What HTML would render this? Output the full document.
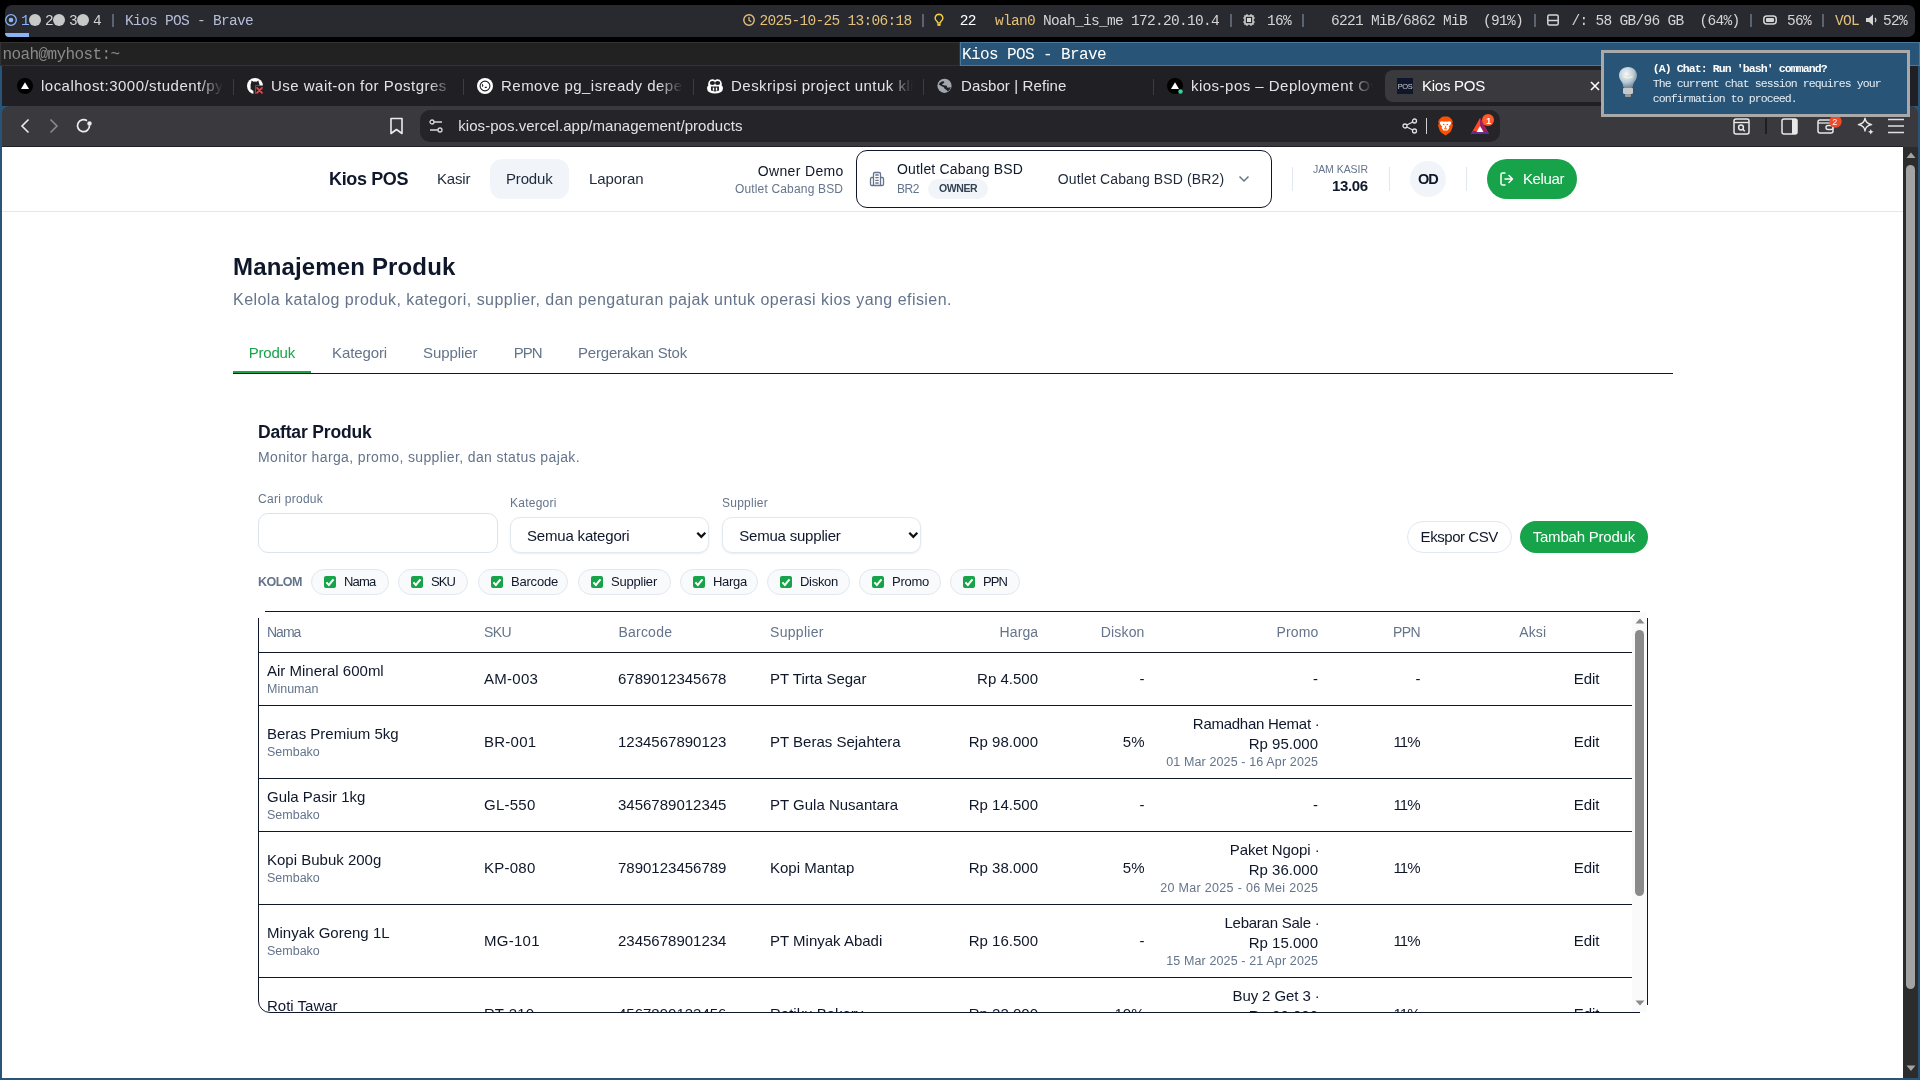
<!DOCTYPE html>
<html><head><meta charset="utf-8"><title>Kios POS</title>
<style>
html,body{margin:0;padding:0;width:1920px;height:1080px;overflow:hidden;background:#000;}
body{position:relative;font-family:"Liberation Sans",sans-serif;}
div,svg,span{position:absolute;}
.t{white-space:pre;line-height:normal;}
</style></head><body>
<div style="left:0;top:0;width:1920px;height:1080px;will-change:transform">
<div style='left:0px;top:0px;width:1920px;height:42px;background:#000'></div>
<div style='left:5px;top:5px;width:1910px;height:32px;background:#282a2f;border-radius:7px'></div>
<div style='left:5px;top:33px;width:24px;height:4px;background:#8ab4f8;border-radius:0 0 0 6px'></div>
<svg style='left:5px;top:14px;' width='12' height='12' viewBox='0 0 12 12'><circle cx='6' cy='6' r='5.3' fill='none' stroke='#8ab4f8' stroke-width='1.3'/><circle cx='6' cy='6' r='2.3' fill='#8ab4f8'/></svg>
<span class='t' style='top:13.00px;font-family:"Liberation Mono",monospace;font-size:14.5px;font-weight:400;color:#8ab4f8;letter-spacing:-0.700px;left:21.00px;'>1</span>
<svg style='left:29px;top:14px;' width='12' height='12' viewBox='0 0 12 12'><circle cx='6' cy='6' r='6' fill='#c8c8c8'/></svg>
<span class='t' style='top:13.00px;font-family:"Liberation Mono",monospace;font-size:14.5px;font-weight:400;color:#d4d4d4;letter-spacing:-0.700px;left:45.00px;'>2</span>
<svg style='left:53px;top:14px;' width='12' height='12' viewBox='0 0 12 12'><circle cx='6' cy='6' r='6' fill='#c8c8c8'/></svg>
<span class='t' style='top:13.00px;font-family:"Liberation Mono",monospace;font-size:14.5px;font-weight:400;color:#d4d4d4;letter-spacing:-0.700px;left:69.00px;'>3</span>
<svg style='left:77px;top:14px;' width='12' height='12' viewBox='0 0 12 12'><circle cx='6' cy='6' r='6' fill='#c8c8c8'/></svg>
<span class='t' style='top:13.00px;font-family:"Liberation Mono",monospace;font-size:14.5px;font-weight:400;color:#d4d4d4;letter-spacing:-0.700px;left:93.00px;'>4</span>
<div style='left:112px;top:14px;width:2px;height:13px;background:#5c6370'></div>
<span class='t' style='top:13.00px;font-family:"Liberation Mono",monospace;font-size:14.5px;font-weight:400;color:#b7bdd9;letter-spacing:-0.700px;left:125.00px;'>Kios POS - Brave</span>
<svg style='left:743px;top:14px;' width='12' height='12' viewBox='0 0 12 12'><circle cx='6' cy='6' r='5.2' fill='none' stroke='#e5c07b' stroke-width='1.4'/><path d='M6 3v3.2l2.2 1.6' fill='none' stroke='#e5c07b' stroke-width='1.3'/></svg>
<span class='t' style='top:13.00px;font-family:"Liberation Mono",monospace;font-size:14.5px;font-weight:400;color:#e5c07b;letter-spacing:-0.700px;left:759.50px;'>2025-10-25 13:06:18</span>
<div style='left:922px;top:14px;width:2px;height:13px;background:#5c6370'></div>
<svg style='left:934px;top:13px;' width='10' height='14' viewBox='0 0 10 14'><path d='M5 1.2a3.8 3.8 0 0 0-2.3 6.8c.6.5.9 1.2.9 1.9h2.8c0-.7.3-1.4.9-1.9A3.8 3.8 0 0 0 5 1.2z' fill='none' stroke='#f5d142' stroke-width='1.4'/><rect x='3.4' y='10.6' width='3.2' height='2.2' fill='#f5d142'/></svg>
<span class='t' style='top:13.00px;font-family:"Liberation Mono",monospace;font-size:14.5px;font-weight:400;color:#ffffff;letter-spacing:-0.700px;left:959.70px;'>22</span>
<span class='t' style='top:13.00px;font-family:"Liberation Mono",monospace;font-size:14.5px;font-weight:400;color:#e5c07b;letter-spacing:-0.700px;left:995.00px;'>wlan0</span>
<span class='t' style='top:13.00px;font-family:"Liberation Mono",monospace;font-size:14.5px;font-weight:400;color:#d4d4d4;letter-spacing:-0.700px;left:1043.00px;'>Noah_is_me 172.20.10.4</span>
<div style='left:1230px;top:14px;width:2px;height:13px;background:#5c6370'></div>
<svg style='left:1243px;top:14px;' width='12' height='12' viewBox='0 0 12 12'><rect x='2' y='2' width='8' height='8' fill='none' stroke='#d4d4d4' stroke-width='1.5'/><rect x='4' y='4' width='4' height='4' fill='#d4d4d4'/><path d='M0 4h2M0 8h2M10 4h2M10 8h2M4 0v2M8 0v2M4 10v2M8 10v2' stroke='#d4d4d4' stroke-width='1.2'/></svg>
<span class='t' style='top:13.00px;font-family:"Liberation Mono",monospace;font-size:14.5px;font-weight:400;color:#d4d4d4;letter-spacing:-0.700px;left:1267.00px;'>16%</span>
<div style='left:1302px;top:14px;width:2px;height:13px;background:#5c6370'></div>
<span class='t' style='top:13.00px;font-family:"Liberation Mono",monospace;font-size:14.5px;font-weight:400;color:#d4d4d4;letter-spacing:-0.700px;left:1331.00px;'>6221 MiB/6862 MiB  (91%)</span>
<div style='left:1534px;top:14px;width:2px;height:13px;background:#5c6370'></div>
<svg style='left:1547px;top:14px;' width='12' height='12' viewBox='0 0 12 12'><rect x='0.8' y='1' width='10.4' height='10' rx='1.5' fill='none' stroke='#d4d4d4' stroke-width='1.5'/><path d='M1 6.5h10' stroke='#d4d4d4' stroke-width='1.5'/></svg>
<span class='t' style='top:13.00px;font-family:"Liberation Mono",monospace;font-size:14.5px;font-weight:400;color:#d4d4d4;letter-spacing:-0.700px;left:1571.60px;'>/: 58 GB/96 GB  (64%)</span>
<div style='left:1750px;top:14px;width:2px;height:13px;background:#5c6370'></div>
<svg style='left:1763px;top:15px;' width='14' height='10' viewBox='0 0 14 10'><rect x='0.8' y='1' width='12.4' height='8' rx='3' fill='none' stroke='#d4d4d4' stroke-width='1.5'/><rect x='3' y='3' width='8' height='4' rx='1' fill='#d4d4d4'/></svg>
<span class='t' style='top:13.00px;font-family:"Liberation Mono",monospace;font-size:14.5px;font-weight:400;color:#d4d4d4;letter-spacing:-0.700px;left:1787.00px;'>56%</span>
<div style='left:1822px;top:14px;width:2px;height:13px;background:#5c6370'></div>
<span class='t' style='top:13.00px;font-family:"Liberation Mono",monospace;font-size:14.5px;font-weight:400;color:#e5c07b;letter-spacing:-0.700px;left:1835.00px;'>VOL</span>
<svg style='left:1866px;top:14px;' width='12' height='12' viewBox='0 0 12 12'><path d='M0 4h3l4-3.5v11L3 8H0z' fill='#d4d4d4'/><path d='M9 4a3 3 0 0 1 0 4' fill='none' stroke='#d4d4d4' stroke-width='1.2'/></svg>
<span class='t' style='top:13.00px;font-family:"Liberation Mono",monospace;font-size:14.5px;font-weight:400;color:#d4d4d4;letter-spacing:-0.700px;left:1883.00px;'>52%</span>
<div style='left:0px;top:42px;width:960px;height:24px;background:#222222;box-sizing:border-box;border:1px solid #333333'></div>
<span class='t' style='top:46.00px;font-family:"Liberation Mono",monospace;font-size:16px;font-weight:400;color:#8a8a8a;letter-spacing:-0.600px;left:2.50px;'>noah@myhost:~</span>
<div style='left:960px;top:42px;width:960px;height:24px;background:#285577;box-sizing:border-box;border:1px solid #4c7899'></div>
<span class='t' style='top:46.00px;font-family:"Liberation Mono",monospace;font-size:16px;font-weight:400;color:#ffffff;letter-spacing:-0.600px;left:962.00px;'>Kios POS - Brave</span>
<div style='left:0px;top:66px;width:1920px;height:1014px;background:#285577'></div>
<div style='left:2px;top:66px;width:1916px;height:40px;background:#202024'></div>
<svg style='left:17px;top:78px;' width='16' height='16' viewBox='0 0 16 16'><circle cx='8' cy='8' r='8' fill='#000'/><path d='M8 4.2l4 6.8H4z' fill='#fff'/></svg>
<span class='t' style='top:77.00px;font-family:"Liberation Sans",sans-serif;font-size:15px;font-weight:400;color:#e3e3e6;letter-spacing:0.480px;left:41.00px;width:182px;overflow:hidden;-webkit-mask-image:linear-gradient(90deg,#000 158px,transparent 182px)'>localhost:3000/student/py</span>
<div style='left:233px;top:79px;width:1px;height:16px;background:#3c3c42'></div>
<svg style='left:247px;top:78px;' width='16' height='16' viewBox='0 0 16 16'><defs><clipPath id='ghc'><path d='M0 0H16V7.5H8.5V16H0Z'/></clipPath></defs><g clip-path='url(#ghc)'><circle cx='8' cy='8' r='8' fill='#fff'/><path d='M4.2 4.6L4.6 2.6 6.6 3.8Q8 3.4 9.4 3.8L11.4 2.6 11.8 4.6Q12.8 6 12.5 8.5 12 11.3 9.6 11.9V16H6.4V12.8Q4.8 12.6 4.2 11.2L3.2 10.4 4 11.9Q3.6 11.2 3.6 9 3.2 6.2 4.2 4.6Z' fill='#202024'/></g><path d='M10 9.8l5 5M15 9.8l-5 5' stroke='#e5484d' stroke-width='1.7' stroke-linecap='round'/></svg>
<span class='t' style='top:77.00px;font-family:"Liberation Sans",sans-serif;font-size:15px;font-weight:400;color:#e3e3e6;letter-spacing:0.480px;left:271.00px;width:182px;overflow:hidden;-webkit-mask-image:linear-gradient(90deg,#000 158px,transparent 182px)'>Use wait-on for Postgres r</span>
<div style='left:463px;top:79px;width:1px;height:16px;background:#3c3c42'></div>
<svg style='left:477px;top:78px;' width='16' height='16' viewBox='0 0 16 16'><circle cx='8' cy='8' r='8' fill='#fff'/><circle cx='8' cy='8' r='4.9' fill='none' stroke='#202024' stroke-width='1.1'/><path d='M5.2 6.2Q6.3 7.5 5.4 8.8M7.8 9.4h2' stroke='#202024' stroke-width='1.1' fill='none'/></svg>
<span class='t' style='top:77.00px;font-family:"Liberation Sans",sans-serif;font-size:15px;font-weight:400;color:#e3e3e6;letter-spacing:0.480px;left:501.00px;width:182px;overflow:hidden;-webkit-mask-image:linear-gradient(90deg,#000 158px,transparent 182px)'>Remove pg_isready deper</span>
<div style='left:693px;top:79px;width:1px;height:16px;background:#3c3c42'></div>
<svg style='left:706px;top:78px;' width='18' height='16' viewBox='0 0 18 16'><path d='M1 10.2Q1 8.2 2.4 7.6 1.8 5.4 2.8 3.4 4.2 1 6.6 1.2 8 1.4 9 2.2 10 1.4 11.4 1.2 13.8 1 15.2 3.4 16.2 5.4 15.6 7.6 17 8.2 17 10.2 17 12.8 14.6 14.2 12.2 15.4 9 15.4 5.8 15.4 3.4 14.2 1 12.8 1 10.2Z' fill='#fff'/><ellipse cx='6.4' cy='5' rx='2.6' ry='2' fill='#202024'/><ellipse cx='11.6' cy='5' rx='2.6' ry='2' fill='#202024'/><path d='M5 8.6H13V12.6Q9 14.2 5 12.6Z' fill='#202024'/><rect x='6.8' y='9.6' width='1.4' height='3' fill='#fff'/><rect x='9.8' y='9.6' width='1.4' height='3' fill='#fff'/></svg>
<span class='t' style='top:77.00px;font-family:"Liberation Sans",sans-serif;font-size:15px;font-weight:400;color:#e3e3e6;letter-spacing:0.480px;left:731.00px;width:182px;overflow:hidden;-webkit-mask-image:linear-gradient(90deg,#000 158px,transparent 182px)'>Deskripsi project untuk klie</span>
<div style='left:923px;top:79px;width:1px;height:16px;background:#3c3c42'></div>
<svg style='left:937px;top:78px;' width='16' height='16' viewBox='0 0 16 16'><circle cx='7.5' cy='7.8' r='7.1' fill='#a3a6ad'/><path d='M1.8 6.6Q3 3.4 6.4 3.2 7.6 3.4 7.2 4.6 6.4 5.6 4.8 6.2 6.6 7.8 9 7.6 10.6 8 10.2 9.8 12 9.6 13.8 9.2 13.2 11.8 10.6 13.6 10.4 12.2 8.6 11.6 7.2 10.6 6.8 9.2 4.4 8.4 1.8 6.6Z' fill='#202024'/></svg>
<span class='t' style='top:77.00px;font-family:"Liberation Sans",sans-serif;font-size:15px;font-weight:400;color:#e3e3e6;letter-spacing:0.103px;left:961.00px;'>Dasbor | Refine</span>
<div style='left:1153px;top:79px;width:1px;height:16px;background:#3c3c42'></div>
<svg style='left:1167px;top:78px;' width='16' height='16' viewBox='0 0 16 16'><circle cx='8' cy='8' r='8' fill='#000'/><path d='M8 4.2l4 6.8H4z' fill='#fff'/><circle cx='13.5' cy='13.5' r='2.2' fill='#34d399'/></svg>
<span class='t' style='top:77.00px;font-family:"Liberation Sans",sans-serif;font-size:15px;font-weight:400;color:#e3e3e6;letter-spacing:0.480px;left:1191.00px;width:182px;overflow:hidden;-webkit-mask-image:linear-gradient(90deg,#000 158px,transparent 182px)'>kios-pos – Deployment Ov</span>
<div style='left:1385px;top:70px;width:240px;height:32px;background:#3a393e;border-radius:8px'></div>
<div style='left:1397px;top:78px;width:16px;height:16px;background:#0f1729;color:#c9cdd6;font:400 7.5px "Liberation Sans",sans-serif;line-height:18px;text-align:center;letter-spacing:-0.4px'>POS</div>
<span class='t' style='top:77.00px;font-family:"Liberation Sans",sans-serif;font-size:15px;font-weight:400;color:#ffffff;letter-spacing:-0.254px;left:1422.00px;'>Kios POS</span>
<svg style='left:1590px;top:81px;' width='10' height='10' viewBox='0 0 10 10'><path d='M1 1l8 8M9 1L1 9' stroke='#fff' stroke-width='1.6'/></svg>
<div style='left:2px;top:106px;width:1916px;height:41px;background:#3a393e;border-radius:8px 8px 0 0'></div>
<div style='left:2px;top:146px;width:1901px;height:1px;background:#222026'></div>
<svg style='left:19px;top:118px;' width='12' height='16' viewBox='0 0 12 16'><path d='M9.5 1.5L3 8l6.5 6.5' fill='none' stroke='#ececec' stroke-width='1.6'/></svg>
<svg style='left:48px;top:118px;' width='12' height='16' viewBox='0 0 12 16'><path d='M2.5 1.5L9 8l-6.5 6.5' fill='none' stroke='#8a8a8e' stroke-width='1.6'/></svg>
<svg style='left:75px;top:117px;' width='18' height='18' viewBox='0 0 18 18'><path d='M14.5 8.5A6 6 0 1 1 12 3.8' fill='none' stroke='#ececec' stroke-width='1.7'/><circle cx='14.5' cy='6.5' r='2.2' fill='#ececec'/></svg>
<svg style='left:389px;top:117px;' width='15' height='18' viewBox='0 0 15 18'><path d='M2 1.5h11v15l-5.5-4-5.5 4z' fill='none' stroke='#ececec' stroke-width='1.6' stroke-linejoin='round'/></svg>
<div style='left:420px;top:110px;width:1080px;height:32px;background:#252429;border-radius:10px'></div>
<svg style='left:429px;top:119px;' width='14' height='14' viewBox='0 0 14 14'><path d='M5 3h8M1 11h8' stroke='#d8d8d8' stroke-width='1.4'/><circle cx='3' cy='3' r='2' fill='none' stroke='#d8d8d8' stroke-width='1.3'/><circle cx='11' cy='11' r='2' fill='none' stroke='#d8d8d8' stroke-width='1.3'/></svg>
<span class='t' style='top:116.80px;font-family:"Liberation Sans",sans-serif;font-size:15px;font-weight:400;color:#e2e2e4;letter-spacing:0.040px;left:458.30px;'>kios-pos.vercel.app/management/products</span>
<svg style='left:1402px;top:118px;' width='16' height='16' viewBox='0 0 16 16'><circle cx='12.5' cy='3' r='2' fill='none' stroke='#e0e0e0' stroke-width='1.3'/><circle cx='3' cy='8' r='2' fill='none' stroke='#e0e0e0' stroke-width='1.3'/><circle cx='12.5' cy='13' r='2' fill='none' stroke='#e0e0e0' stroke-width='1.3'/><path d='M4.8 7l6-3M4.8 9l6 3' stroke='#e0e0e0' stroke-width='1.3'/></svg>
<div style='left:1426px;top:118px;width:1px;height:16px;background:#d0d0d0'></div>
<svg style='left:1437px;top:116px;' width='17' height='20' viewBox='0 0 17 20'><path d='M4.5 1.2L6.3 0.6H10.7L12.5 1.2 14.8 3.4 15.8 5.8 15.2 7.4 16 9.2 14.4 14.2Q13.4 16.4 11.4 17.6L8.5 19.6 5.6 17.6Q3.6 16.4 2.6 14.2L1 9.2 1.8 7.4 1.2 5.8 2.2 3.4Z' fill='#ff5000'/><path d='M2.8 6.2Q4 5.2 5.6 5.4L7.2 5.8 8.5 5.4 9.8 5.8 11.4 5.4Q13 5.2 14.2 6.2L13.6 8.4 11.8 10.6 12.4 11.8 10.6 14.4H6.4L4.6 11.8 5.2 10.6 3.4 8.4Z' fill='#fff'/><path d='M6 8.2L7.4 8.8M11 8.2L9.6 8.8M8.5 10.2V11.8M7.2 12.8H9.8' stroke='#ff5000' stroke-width='1.1'/></svg>
<svg style='left:1470px;top:117px;' width='21' height='18' viewBox='0 0 21 18'><path d='M10 1L1 17h18z' fill='#ff4724'/><path d='M10 1L19 17h-4.5L10 9z' fill='#9e1f63'/><path d='M1 17h18l-2-3H3z' fill='#662d91'/><path d='M10 9l-3.5 6h7z' fill='#fff'/></svg>
<svg style='left:1482px;top:114px;' width='12' height='12' viewBox='0 0 12 12'><circle cx='6' cy='6' r='6' fill='#ff5a2b'/></svg>
<span class='t' style='top:114.50px;font-family:"Liberation Sans",sans-serif;font-size:9.5px;font-weight:700;color:#ffffff;left:1486.00px;'>1</span>
<svg style='left:1733px;top:118px;' width='17' height='17' viewBox='0 0 17 17'><rect x='1' y='1' width='15' height='15' rx='2' fill='none' stroke='#e8e8e8' stroke-width='1.5'/><path d='M1 4.5h15' stroke='#e8e8e8' stroke-width='1.4'/><circle cx='8' cy='9.5' r='2.4' fill='none' stroke='#e8e8e8' stroke-width='1.5'/><path d='M9.8 11.3l2 2' stroke='#e8e8e8' stroke-width='1.5'/></svg>
<div style='left:1765px;top:118px;width:2px;height:16px;background:#1e1e22'></div>
<svg style='left:1781px;top:118px;' width='17' height='17' viewBox='0 0 17 17'><rect x='1' y='1' width='15' height='15' rx='2' fill='none' stroke='#e8e8e8' stroke-width='1.5'/><rect x='11' y='1' width='5' height='15' fill='#e8e8e8'/></svg>
<svg style='left:1817px;top:118px;' width='18' height='17' viewBox='0 0 18 17'><rect x='1' y='2' width='15' height='13' rx='2' fill='none' stroke='#e8e8e8' stroke-width='1.5'/><path d='M1 5h15' stroke='#e8e8e8' stroke-width='1.3'/><rect x='9' y='7.5' width='7' height='4' rx='2' fill='none' stroke='#e8e8e8' stroke-width='1.4'/></svg>
<svg style='left:1829px;top:115px;' width='13' height='13' viewBox='0 0 13 13'><circle cx='6.5' cy='6.5' r='6.2' fill='#f04a2a'/></svg>
<span class='t' style='top:117.00px;font-family:"Liberation Sans",sans-serif;font-size:9px;font-weight:400;color:#ffffff;left:1832.30px;'>2</span>
<svg style='left:1857px;top:117px;' width='18' height='19' viewBox='0 0 18 19'><path d='M8 1.2Q8.6 6.6 14.6 7.6 8.6 8.6 8 14 7.4 8.6 1.4 7.6 7.4 6.6 8 1.2Z' fill='none' stroke='#e8e8e8' stroke-width='1.4' stroke-linejoin='round'/><path d='M13.8 12Q14.1 14.4 16.6 14.8 14.1 15.2 13.8 17.6 13.5 15.2 11 14.8 13.5 14.4 13.8 12Z' fill='#e8e8e8'/></svg>
<svg style='left:1888px;top:118px;' width='17' height='16' viewBox='0 0 17 16'><path d='M0 1.5h16M0 8h16M0 14.5h16' stroke='#e0e0e0' stroke-width='1.6'/></svg>
<div style='left:2px;top:147px;width:1901px;height:931px;background:#ffffff'></div>
<div style='left:1903px;top:147px;width:15px;height:931px;background:#2c2c2c'></div>
<svg style='left:1906px;top:152px;' width='10' height='7' viewBox='0 0 10 7'><path d='M5 0.5L9.5 6h-9z' fill='#a3a3a3'/></svg>
<div style='left:1906px;top:165px;width:9px;height:824px;background:#a3a3a3;border-radius:4.5px'></div>
<svg style='left:1906px;top:1065px;' width='10' height='7' viewBox='0 0 10 7'><path d='M0.5 0.5h9L5 6z' fill='#a3a3a3'/></svg>
<div style='left:2px;top:211px;width:1901px;height:1px;background:#e2e8f0'></div>
<span class='t' style='top:168.70px;font-family:"Liberation Sans",sans-serif;font-size:18px;font-weight:700;color:#0f172a;letter-spacing:-0.366px;left:329.00px;'>Kios POS</span>
<div style='left:490px;top:159px;width:79px;height:40px;background:#f1f5f9;border-radius:12px'></div>
<span class='t' style='top:170.30px;font-family:"Liberation Sans",sans-serif;font-size:15px;font-weight:400;color:#1e293b;letter-spacing:-0.178px;left:437.00px;'>Kasir</span>
<span class='t' style='top:170.30px;font-family:"Liberation Sans",sans-serif;font-size:15px;font-weight:400;color:#1e293b;letter-spacing:-0.172px;left:506.00px;'>Produk</span>
<span class='t' style='top:170.30px;font-family:"Liberation Sans",sans-serif;font-size:15px;font-weight:400;color:#1e293b;letter-spacing:-0.080px;left:589.00px;'>Laporan</span>
<span class='t' style='top:162.50px;font-family:"Liberation Sans",sans-serif;font-size:14px;font-weight:400;color:#0f172a;letter-spacing:0.333px;right:1076.37px;text-align:right;'>Owner Demo</span>
<span class='t' style='top:182.00px;font-family:"Liberation Sans",sans-serif;font-size:12px;font-weight:400;color:#64748b;letter-spacing:0.170px;right:1076.83px;text-align:right;'>Outlet Cabang BSD</span>
<div style='left:856px;top:150px;width:416px;height:58px;box-sizing:border-box;border:1px solid #0f172a;border-radius:11px'></div>
<svg style='left:869px;top:171px;' width='16' height='16' viewBox='0 0 16 16'><path d='M4.5 14.5V2.8c0-.7.5-1.3 1.2-1.3h4.6c.7 0 1.2.6 1.2 1.3v11.7M4.5 6.5H2.8c-.7 0-1.3.6-1.3 1.3v5.4c0 .7.6 1.3 1.3 1.3h10.4c.7 0 1.3-.6 1.3-1.3V7.8c0-.7-.6-1.3-1.3-1.3h-1.7M6.8 4h2.4M6.8 6.7h2.4M6.8 9.4h2.4M6.8 12h2.4' fill='none' stroke='#64748b' stroke-width='1.3' stroke-linecap='round'/></svg>
<span class='t' style='top:160.80px;font-family:"Liberation Sans",sans-serif;font-size:14px;font-weight:400;color:#0f172a;letter-spacing:0.178px;left:897.00px;'>Outlet Cabang BSD</span>
<span class='t' style='top:182.00px;font-family:"Liberation Sans",sans-serif;font-size:12px;font-weight:400;color:#64748b;letter-spacing:-0.448px;left:897.00px;'>BR2</span>
<div style='left:928px;top:179px;width:60px;height:20px;background:#f1f5f9;border-radius:10px'></div>
<span class='t' style='top:182.00px;font-family:"Liberation Sans",sans-serif;font-size:10.5px;font-weight:700;color:#334155;letter-spacing:-0.390px;left:939.00px;'>OWNER</span>
<span class='t' style='top:170.90px;font-family:"Liberation Sans",sans-serif;font-size:14px;font-weight:400;color:#1e293b;letter-spacing:0.135px;left:1057.80px;'>Outlet Cabang BSD (BR2)</span>
<svg style='left:1238px;top:175px;' width='12' height='8' viewBox='0 0 12 8'><path d='M1.5 1.5l4.5 4.5 4.5-4.5' fill='none' stroke='#64748b' stroke-width='1.5'/></svg>
<div style='left:1292px;top:167px;width:1px;height:24px;background:#e2e8f0'></div>
<span class='t' style='top:163.00px;font-family:"Liberation Sans",sans-serif;font-size:10.5px;font-weight:400;color:#64748b;letter-spacing:-0.049px;right:552.05px;text-align:right;'>JAM KASIR</span>
<span class='t' style='top:177.00px;font-family:"Liberation Sans",sans-serif;font-size:15px;font-weight:700;color:#0f172a;letter-spacing:-0.409px;right:552.41px;text-align:right;'>13.06</span>
<div style='left:1389px;top:167px;width:1px;height:24px;background:#e2e8f0'></div>
<div style='left:1410px;top:161px;width:36px;height:36px;background:#f1f5f9;border-radius:50%'></div>
<span class='t' style='top:170.90px;font-family:"Liberation Sans",sans-serif;font-size:14.5px;font-weight:700;color:#0f172a;letter-spacing:-1.000px;left:1418.00px;'>OD</span>
<div style='left:1466px;top:167px;width:1px;height:24px;background:#e2e8f0'></div>
<div style='left:1487px;top:159px;width:90px;height:40px;background:#16a34a;border-radius:20px'></div>
<svg style='left:1499px;top:171px;' width='16' height='16' viewBox='0 0 16 16'><path d='M6 2H3.5A1.5 1.5 0 0 0 2 3.5v9A1.5 1.5 0 0 0 3.5 14H6M10 4.5L13.5 8 10 11.5M13.5 8H6' fill='none' stroke='#ffffff' stroke-width='1.5' stroke-linecap='round' stroke-linejoin='round'/></svg>
<span class='t' style='top:169.80px;font-family:"Liberation Sans",sans-serif;font-size:15px;font-weight:400;color:#ffffff;letter-spacing:-0.393px;left:1523.00px;'>Keluar</span>
<span class='t' style='top:253.00px;font-family:"Liberation Sans",sans-serif;font-size:24px;font-weight:700;color:#0f172a;letter-spacing:0.152px;left:233.00px;'>Manajemen Produk</span>
<span class='t' style='top:290.70px;font-family:"Liberation Sans",sans-serif;font-size:16px;font-weight:400;color:#64748b;letter-spacing:0.457px;left:233.00px;'>Kelola katalog produk, kategori, supplier, dan pengaturan pajak untuk operasi kios yang efisien.</span>
<span class='t' style='top:344.30px;font-family:"Liberation Sans",sans-serif;font-size:15px;font-weight:400;color:#16a34a;letter-spacing:-0.222px;left:248.80px;'>Produk</span>
<span class='t' style='top:344.30px;font-family:"Liberation Sans",sans-serif;font-size:15px;font-weight:400;color:#64748b;letter-spacing:-0.109px;left:332.00px;'>Kategori</span>
<span class='t' style='top:344.30px;font-family:"Liberation Sans",sans-serif;font-size:15px;font-weight:400;color:#64748b;letter-spacing:-0.068px;left:423.00px;'>Supplier</span>
<span class='t' style='top:344.30px;font-family:"Liberation Sans",sans-serif;font-size:15px;font-weight:400;color:#64748b;letter-spacing:-1.000px;left:513.80px;'>PPN</span>
<span class='t' style='top:344.30px;font-family:"Liberation Sans",sans-serif;font-size:15px;font-weight:400;color:#64748b;letter-spacing:-0.182px;left:578.00px;'>Pergerakan Stok</span>
<div style='left:233px;top:373px;width:1440px;height:1px;background:#0f172a'></div>
<div style='left:233px;top:371px;width:78px;height:2px;background:#16a34a'></div>
<span class='t' style='top:421.80px;font-family:"Liberation Sans",sans-serif;font-size:17.5px;font-weight:700;color:#0f172a;letter-spacing:-0.163px;left:258.00px;'>Daftar Produk</span>
<span class='t' style='top:449.00px;font-family:"Liberation Sans",sans-serif;font-size:14px;font-weight:400;color:#64748b;letter-spacing:0.377px;left:258.00px;'>Monitor harga, promo, supplier, dan status pajak.</span>
<span class='t' style='top:491.90px;font-family:"Liberation Sans",sans-serif;font-size:12px;font-weight:400;color:#64748b;letter-spacing:0.279px;left:258.00px;'>Cari produk</span>
<div style='left:258px;top:513px;width:240px;height:40px;box-sizing:border-box;border:1px solid #dbe3ec;border-radius:10px;background:#fff'></div>
<span class='t' style='top:496.00px;font-family:"Liberation Sans",sans-serif;font-size:12px;font-weight:400;color:#64748b;letter-spacing:0.250px;left:510.00px;'>Kategori</span>
<div style='left:510px;top:517px;width:199px;height:36px;box-sizing:border-box;border:1px solid #e2e8f0;border-radius:10px;background:#fff;box-shadow:0 1px 2px rgba(15,23,42,0.08)'></div>
<span class='t' style='top:526.80px;font-family:"Liberation Sans",sans-serif;font-size:15px;font-weight:400;color:#0f172a;letter-spacing:-0.183px;left:527.00px;'>Semua kategori</span>
<svg style='left:696px;top:531px;' width='11' height='9' viewBox='0 0 11 9'><path d='M1.3 1.8l4 4 4-4' fill='none' stroke='#111' stroke-width='2.3'/></svg>
<span class='t' style='top:496.00px;font-family:"Liberation Sans",sans-serif;font-size:12px;font-weight:400;color:#64748b;letter-spacing:0.246px;left:722.00px;'>Supplier</span>
<div style='left:722px;top:517px;width:199px;height:36px;box-sizing:border-box;border:1px solid #e2e8f0;border-radius:10px;background:#fff;box-shadow:0 1px 2px rgba(15,23,42,0.08)'></div>
<span class='t' style='top:526.80px;font-family:"Liberation Sans",sans-serif;font-size:15px;font-weight:400;color:#0f172a;letter-spacing:-0.202px;left:739.20px;'>Semua supplier</span>
<svg style='left:908px;top:531px;' width='11' height='9' viewBox='0 0 11 9'><path d='M1.3 1.8l4 4 4-4' fill='none' stroke='#111' stroke-width='2.3'/></svg>
<div style='left:1407px;top:521px;width:105px;height:32px;box-sizing:border-box;border:1px solid #e2e8f0;border-radius:16px;background:#fff'></div>
<span class='t' style='top:528.20px;font-family:"Liberation Sans",sans-serif;font-size:15px;font-weight:400;color:#0f172a;letter-spacing:-0.450px;left:1420.60px;'>Ekspor CSV</span>
<div style='left:1520px;top:521px;width:128px;height:32px;background:#16a34a;border-radius:16px'></div>
<span class='t' style='top:528.20px;font-family:"Liberation Sans",sans-serif;font-size:15px;font-weight:400;color:#ffffff;letter-spacing:-0.213px;left:1532.70px;'>Tambah Produk</span>
<span class='t' style='top:575.20px;font-family:"Liberation Sans",sans-serif;font-size:12.5px;font-weight:700;color:#64748b;letter-spacing:-0.506px;left:258.00px;'>KOLOM</span>
<div style='left:311px;top:569px;width:78px;height:26px;box-sizing:border-box;border:1px solid #e2e8f0;border-radius:13px;background:#f8fafc'></div>
<svg style='left:324px;top:576px;' width='12' height='12' viewBox='0 0 12 12'><rect x='0' y='0' width='12' height='12' rx='2' fill='#16a34a'/><path d='M2.4 6.4l2.5 2.6 4.6-5.6' fill='none' stroke='#fff' stroke-width='2'/></svg>
<span class='t' style='top:573.80px;font-family:"Liberation Sans",sans-serif;font-size:13px;font-weight:400;color:#0f172a;letter-spacing:-0.797px;left:344.00px;'>Nama</span>
<div style='left:398px;top:569px;width:70px;height:26px;box-sizing:border-box;border:1px solid #e2e8f0;border-radius:13px;background:#f8fafc'></div>
<svg style='left:411px;top:576px;' width='12' height='12' viewBox='0 0 12 12'><rect x='0' y='0' width='12' height='12' rx='2' fill='#16a34a'/><path d='M2.4 6.4l2.5 2.6 4.6-5.6' fill='none' stroke='#fff' stroke-width='2'/></svg>
<span class='t' style='top:573.80px;font-family:"Liberation Sans",sans-serif;font-size:13px;font-weight:400;color:#0f172a;letter-spacing:-0.911px;left:431.00px;'>SKU</span>
<div style='left:478px;top:569px;width:90px;height:26px;box-sizing:border-box;border:1px solid #e2e8f0;border-radius:13px;background:#f8fafc'></div>
<svg style='left:491px;top:576px;' width='12' height='12' viewBox='0 0 12 12'><rect x='0' y='0' width='12' height='12' rx='2' fill='#16a34a'/><path d='M2.4 6.4l2.5 2.6 4.6-5.6' fill='none' stroke='#fff' stroke-width='2'/></svg>
<span class='t' style='top:573.80px;font-family:"Liberation Sans",sans-serif;font-size:13px;font-weight:400;color:#0f172a;letter-spacing:-0.203px;left:511.00px;'>Barcode</span>
<div style='left:578px;top:569px;width:93px;height:26px;box-sizing:border-box;border:1px solid #e2e8f0;border-radius:13px;background:#f8fafc'></div>
<svg style='left:591px;top:576px;' width='12' height='12' viewBox='0 0 12 12'><rect x='0' y='0' width='12' height='12' rx='2' fill='#16a34a'/><path d='M2.4 6.4l2.5 2.6 4.6-5.6' fill='none' stroke='#fff' stroke-width='2'/></svg>
<span class='t' style='top:573.80px;font-family:"Liberation Sans",sans-serif;font-size:13px;font-weight:400;color:#0f172a;letter-spacing:-0.213px;left:611.00px;'>Supplier</span>
<div style='left:680px;top:569px;width:78px;height:26px;box-sizing:border-box;border:1px solid #e2e8f0;border-radius:13px;background:#f8fafc'></div>
<svg style='left:693px;top:576px;' width='12' height='12' viewBox='0 0 12 12'><rect x='0' y='0' width='12' height='12' rx='2' fill='#16a34a'/><path d='M2.4 6.4l2.5 2.6 4.6-5.6' fill='none' stroke='#fff' stroke-width='2'/></svg>
<span class='t' style='top:573.80px;font-family:"Liberation Sans",sans-serif;font-size:13px;font-weight:400;color:#0f172a;letter-spacing:-0.284px;left:713.00px;'>Harga</span>
<div style='left:767px;top:569px;width:83px;height:26px;box-sizing:border-box;border:1px solid #e2e8f0;border-radius:13px;background:#f8fafc'></div>
<svg style='left:780px;top:576px;' width='12' height='12' viewBox='0 0 12 12'><rect x='0' y='0' width='12' height='12' rx='2' fill='#16a34a'/><path d='M2.4 6.4l2.5 2.6 4.6-5.6' fill='none' stroke='#fff' stroke-width='2'/></svg>
<span class='t' style='top:573.80px;font-family:"Liberation Sans",sans-serif;font-size:13px;font-weight:400;color:#0f172a;letter-spacing:-0.292px;left:800.00px;'>Diskon</span>
<div style='left:859px;top:569px;width:82px;height:26px;box-sizing:border-box;border:1px solid #e2e8f0;border-radius:13px;background:#f8fafc'></div>
<svg style='left:872px;top:576px;' width='12' height='12' viewBox='0 0 12 12'><rect x='0' y='0' width='12' height='12' rx='2' fill='#16a34a'/><path d='M2.4 6.4l2.5 2.6 4.6-5.6' fill='none' stroke='#fff' stroke-width='2'/></svg>
<span class='t' style='top:573.80px;font-family:"Liberation Sans",sans-serif;font-size:13px;font-weight:400;color:#0f172a;letter-spacing:-0.259px;left:892.00px;'>Promo</span>
<div style='left:950px;top:569px;width:70px;height:26px;box-sizing:border-box;border:1px solid #e2e8f0;border-radius:13px;background:#f8fafc'></div>
<svg style='left:963px;top:576px;' width='12' height='12' viewBox='0 0 12 12'><rect x='0' y='0' width='12' height='12' rx='2' fill='#16a34a'/><path d='M2.4 6.4l2.5 2.6 4.6-5.6' fill='none' stroke='#fff' stroke-width='2'/></svg>
<span class='t' style='top:573.80px;font-family:"Liberation Sans",sans-serif;font-size:13px;font-weight:400;color:#0f172a;letter-spacing:-0.911px;left:983.00px;'>PPN</span>
<div style='left:258px;top:611px;width:1390px;height:402px;box-sizing:border-box;border:1px solid #0f172a;border-radius:12px;overflow:hidden;background:#fff'>
<span class='t' style='top:11.90px;font-family:"Liberation Sans",sans-serif;font-size:14px;font-weight:400;color:#64748b;letter-spacing:-1.000px;left:8.00px;'>Nama</span>
<span class='t' style='top:11.90px;font-family:"Liberation Sans",sans-serif;font-size:14px;font-weight:400;color:#64748b;letter-spacing:-0.599px;left:225.00px;'>SKU</span>
<span class='t' style='top:11.90px;font-family:"Liberation Sans",sans-serif;font-size:14px;font-weight:400;color:#64748b;letter-spacing:0.235px;left:359.40px;'>Barcode</span>
<span class='t' style='top:11.90px;font-family:"Liberation Sans",sans-serif;font-size:14px;font-weight:400;color:#64748b;letter-spacing:0.297px;left:511.00px;'>Supplier</span>
<span class='t' style='top:11.90px;font-family:"Liberation Sans",sans-serif;font-size:14px;font-weight:400;color:#64748b;letter-spacing:0.112px;right:608.79px;text-align:right;'>Harga</span>
<span class='t' style='top:11.90px;font-family:"Liberation Sans",sans-serif;font-size:14px;font-weight:400;color:#64748b;letter-spacing:0.167px;right:502.43px;text-align:right;'>Diskon</span>
<span class='t' style='top:11.90px;font-family:"Liberation Sans",sans-serif;font-size:14px;font-weight:400;color:#64748b;letter-spacing:0.153px;right:328.55px;text-align:right;'>Promo</span>
<span class='t' style='top:11.90px;font-family:"Liberation Sans",sans-serif;font-size:14px;font-weight:400;color:#64748b;letter-spacing:-0.532px;right:226.93px;text-align:right;'>PPN</span>
<span class='t' style='top:11.90px;font-family:"Liberation Sans",sans-serif;font-size:14px;font-weight:400;color:#64748b;letter-spacing:0.162px;left:1260.20px;'>Aksi</span>
<div style='left:0px;top:40px;width:1373px;height:1px;background:#0f172a'></div>
<span class='t' style='top:50.00px;font-family:"Liberation Sans",sans-serif;font-size:15px;font-weight:400;color:#0f172a;left:8.00px;'>Air Mineral 600ml</span>
<span class='t' style='top:70.00px;font-family:"Liberation Sans",sans-serif;font-size:12.5px;font-weight:400;color:#64748b;left:8.00px;'>Minuman</span>
<span class='t' style='top:58.00px;font-family:"Liberation Sans",sans-serif;font-size:15px;font-weight:400;color:#0f172a;letter-spacing:0.263px;left:225.00px;'>AM-003</span>
<span class='t' style='top:58.00px;font-family:"Liberation Sans",sans-serif;font-size:15px;font-weight:400;color:#0f172a;left:359.00px;'>6789012345678</span>
<span class='t' style='top:58.00px;font-family:"Liberation Sans",sans-serif;font-size:15px;font-weight:400;color:#0f172a;left:511.00px;'>PT Tirta Segar</span>
<span class='t' style='top:58.00px;font-family:"Liberation Sans",sans-serif;font-size:15px;font-weight:400;color:#0f172a;right:609.00px;text-align:right;'>Rp 4.500</span>
<span class='t' style='top:58.00px;font-family:"Liberation Sans",sans-serif;font-size:15px;font-weight:400;color:#0f172a;right:502.50px;text-align:right;'>-</span>
<span class='t' style='top:58.00px;font-family:"Liberation Sans",sans-serif;font-size:15px;font-weight:400;color:#0f172a;right:329.00px;text-align:right;'>-</span>
<span class='t' style='top:58.00px;font-family:"Liberation Sans",sans-serif;font-size:15px;font-weight:400;color:#0f172a;right:226.50px;text-align:right;'>-</span>
<span class='t' style='top:58.00px;font-family:"Liberation Sans",sans-serif;font-size:15px;font-weight:400;color:#0f172a;right:47.50px;text-align:right;'>Edit</span>
<div style='left:0px;top:93px;width:1373px;height:1px;background:#0f172a'></div>
<span class='t' style='top:113.00px;font-family:"Liberation Sans",sans-serif;font-size:15px;font-weight:400;color:#0f172a;left:8.00px;'>Beras Premium 5kg</span>
<span class='t' style='top:133.00px;font-family:"Liberation Sans",sans-serif;font-size:12.5px;font-weight:400;color:#64748b;left:8.00px;'>Sembako</span>
<span class='t' style='top:121.00px;font-family:"Liberation Sans",sans-serif;font-size:15px;font-weight:400;color:#0f172a;letter-spacing:0.254px;left:225.00px;'>BR-001</span>
<span class='t' style='top:121.00px;font-family:"Liberation Sans",sans-serif;font-size:15px;font-weight:400;color:#0f172a;left:359.00px;'>1234567890123</span>
<span class='t' style='top:121.00px;font-family:"Liberation Sans",sans-serif;font-size:15px;font-weight:400;color:#0f172a;left:511.00px;'>PT Beras Sejahtera</span>
<span class='t' style='top:121.00px;font-family:"Liberation Sans",sans-serif;font-size:15px;font-weight:400;color:#0f172a;right:609.00px;text-align:right;'>Rp 98.000</span>
<span class='t' style='top:121.00px;font-family:"Liberation Sans",sans-serif;font-size:15px;font-weight:400;color:#0f172a;right:502.50px;text-align:right;'>5%</span>
<span class='t' style='top:103.00px;font-family:"Liberation Sans",sans-serif;font-size:15px;font-weight:400;color:#0f172a;letter-spacing:-0.270px;right:327.57px;text-align:right;'>Ramadhan Hemat ·</span>
<span class='t' style='top:123.00px;font-family:"Liberation Sans",sans-serif;font-size:15px;font-weight:400;color:#0f172a;right:329.00px;text-align:right;'>Rp 95.000</span>
<span class='t' style='top:143.00px;font-family:"Liberation Sans",sans-serif;font-size:12.5px;font-weight:400;color:#64748b;letter-spacing:0.131px;right:328.87px;text-align:right;'>01 Mar 2025 - 16 Apr 2025</span>
<span class='t' style='top:121.00px;font-family:"Liberation Sans",sans-serif;font-size:15px;font-weight:400;color:#0f172a;letter-spacing:-1.000px;right:227.50px;text-align:right;'>11%</span>
<span class='t' style='top:121.00px;font-family:"Liberation Sans",sans-serif;font-size:15px;font-weight:400;color:#0f172a;right:47.50px;text-align:right;'>Edit</span>
<div style='left:0px;top:166px;width:1373px;height:1px;background:#0f172a'></div>
<span class='t' style='top:176.00px;font-family:"Liberation Sans",sans-serif;font-size:15px;font-weight:400;color:#0f172a;left:8.00px;'>Gula Pasir 1kg</span>
<span class='t' style='top:196.00px;font-family:"Liberation Sans",sans-serif;font-size:12.5px;font-weight:400;color:#64748b;left:8.00px;'>Sembako</span>
<span class='t' style='top:184.00px;font-family:"Liberation Sans",sans-serif;font-size:15px;font-weight:400;color:#0f172a;letter-spacing:0.250px;left:225.00px;'>GL-550</span>
<span class='t' style='top:184.00px;font-family:"Liberation Sans",sans-serif;font-size:15px;font-weight:400;color:#0f172a;left:359.00px;'>3456789012345</span>
<span class='t' style='top:184.00px;font-family:"Liberation Sans",sans-serif;font-size:15px;font-weight:400;color:#0f172a;left:511.00px;'>PT Gula Nusantara</span>
<span class='t' style='top:184.00px;font-family:"Liberation Sans",sans-serif;font-size:15px;font-weight:400;color:#0f172a;right:609.00px;text-align:right;'>Rp 14.500</span>
<span class='t' style='top:184.00px;font-family:"Liberation Sans",sans-serif;font-size:15px;font-weight:400;color:#0f172a;right:502.50px;text-align:right;'>-</span>
<span class='t' style='top:184.00px;font-family:"Liberation Sans",sans-serif;font-size:15px;font-weight:400;color:#0f172a;right:329.00px;text-align:right;'>-</span>
<span class='t' style='top:184.00px;font-family:"Liberation Sans",sans-serif;font-size:15px;font-weight:400;color:#0f172a;letter-spacing:-1.000px;right:227.50px;text-align:right;'>11%</span>
<span class='t' style='top:184.00px;font-family:"Liberation Sans",sans-serif;font-size:15px;font-weight:400;color:#0f172a;right:47.50px;text-align:right;'>Edit</span>
<div style='left:0px;top:219px;width:1373px;height:1px;background:#0f172a'></div>
<span class='t' style='top:239.00px;font-family:"Liberation Sans",sans-serif;font-size:15px;font-weight:400;color:#0f172a;left:8.00px;'>Kopi Bubuk 200g</span>
<span class='t' style='top:259.00px;font-family:"Liberation Sans",sans-serif;font-size:12.5px;font-weight:400;color:#64748b;left:8.00px;'>Sembako</span>
<span class='t' style='top:247.00px;font-family:"Liberation Sans",sans-serif;font-size:15px;font-weight:400;color:#0f172a;letter-spacing:0.250px;left:225.00px;'>KP-080</span>
<span class='t' style='top:247.00px;font-family:"Liberation Sans",sans-serif;font-size:15px;font-weight:400;color:#0f172a;left:359.00px;'>7890123456789</span>
<span class='t' style='top:247.00px;font-family:"Liberation Sans",sans-serif;font-size:15px;font-weight:400;color:#0f172a;left:511.00px;'>Kopi Mantap</span>
<span class='t' style='top:247.00px;font-family:"Liberation Sans",sans-serif;font-size:15px;font-weight:400;color:#0f172a;right:609.00px;text-align:right;'>Rp 38.000</span>
<span class='t' style='top:247.00px;font-family:"Liberation Sans",sans-serif;font-size:15px;font-weight:400;color:#0f172a;right:502.50px;text-align:right;'>5%</span>
<span class='t' style='top:229.00px;font-family:"Liberation Sans",sans-serif;font-size:15px;font-weight:400;color:#0f172a;letter-spacing:-0.077px;right:327.38px;text-align:right;'>Paket Ngopi ·</span>
<span class='t' style='top:249.00px;font-family:"Liberation Sans",sans-serif;font-size:15px;font-weight:400;color:#0f172a;right:329.00px;text-align:right;'>Rp 36.000</span>
<span class='t' style='top:269.00px;font-family:"Liberation Sans",sans-serif;font-size:12.5px;font-weight:400;color:#64748b;letter-spacing:0.324px;right:328.68px;text-align:right;'>20 Mar 2025 - 06 Mei 2025</span>
<span class='t' style='top:247.00px;font-family:"Liberation Sans",sans-serif;font-size:15px;font-weight:400;color:#0f172a;letter-spacing:-1.000px;right:227.50px;text-align:right;'>11%</span>
<span class='t' style='top:247.00px;font-family:"Liberation Sans",sans-serif;font-size:15px;font-weight:400;color:#0f172a;right:47.50px;text-align:right;'>Edit</span>
<div style='left:0px;top:292px;width:1373px;height:1px;background:#0f172a'></div>
<span class='t' style='top:312.00px;font-family:"Liberation Sans",sans-serif;font-size:15px;font-weight:400;color:#0f172a;left:8.00px;'>Minyak Goreng 1L</span>
<span class='t' style='top:332.00px;font-family:"Liberation Sans",sans-serif;font-size:12.5px;font-weight:400;color:#64748b;left:8.00px;'>Sembako</span>
<span class='t' style='top:320.00px;font-family:"Liberation Sans",sans-serif;font-size:15px;font-weight:400;color:#0f172a;letter-spacing:0.271px;left:225.00px;'>MG-101</span>
<span class='t' style='top:320.00px;font-family:"Liberation Sans",sans-serif;font-size:15px;font-weight:400;color:#0f172a;left:359.00px;'>2345678901234</span>
<span class='t' style='top:320.00px;font-family:"Liberation Sans",sans-serif;font-size:15px;font-weight:400;color:#0f172a;left:511.00px;'>PT Minyak Abadi</span>
<span class='t' style='top:320.00px;font-family:"Liberation Sans",sans-serif;font-size:15px;font-weight:400;color:#0f172a;right:609.00px;text-align:right;'>Rp 16.500</span>
<span class='t' style='top:320.00px;font-family:"Liberation Sans",sans-serif;font-size:15px;font-weight:400;color:#0f172a;right:502.50px;text-align:right;'>-</span>
<span class='t' style='top:302.00px;font-family:"Liberation Sans",sans-serif;font-size:15px;font-weight:400;color:#0f172a;letter-spacing:-0.246px;right:327.55px;text-align:right;'>Lebaran Sale ·</span>
<span class='t' style='top:322.00px;font-family:"Liberation Sans",sans-serif;font-size:15px;font-weight:400;color:#0f172a;right:329.00px;text-align:right;'>Rp 15.000</span>
<span class='t' style='top:342.00px;font-family:"Liberation Sans",sans-serif;font-size:12.5px;font-weight:400;color:#64748b;letter-spacing:0.131px;right:328.87px;text-align:right;'>15 Mar 2025 - 21 Apr 2025</span>
<span class='t' style='top:320.00px;font-family:"Liberation Sans",sans-serif;font-size:15px;font-weight:400;color:#0f172a;letter-spacing:-1.000px;right:227.50px;text-align:right;'>11%</span>
<span class='t' style='top:320.00px;font-family:"Liberation Sans",sans-serif;font-size:15px;font-weight:400;color:#0f172a;right:47.50px;text-align:right;'>Edit</span>
<div style='left:0px;top:365px;width:1373px;height:1px;background:#0f172a'></div>
<span class='t' style='top:385.00px;font-family:"Liberation Sans",sans-serif;font-size:15px;font-weight:400;color:#0f172a;left:8.00px;'>Roti Tawar</span>
<span class='t' style='top:405.00px;font-family:"Liberation Sans",sans-serif;font-size:12.5px;font-weight:400;color:#64748b;left:8.00px;'>Sembako</span>
<span class='t' style='top:393.00px;font-family:"Liberation Sans",sans-serif;font-size:15px;font-weight:400;color:#0f172a;letter-spacing:0.245px;left:225.00px;'>RT-210</span>
<span class='t' style='top:393.00px;font-family:"Liberation Sans",sans-serif;font-size:15px;font-weight:400;color:#0f172a;left:359.00px;'>4567890123456</span>
<span class='t' style='top:393.00px;font-family:"Liberation Sans",sans-serif;font-size:15px;font-weight:400;color:#0f172a;left:511.00px;'>Rotiku Bakery</span>
<span class='t' style='top:393.00px;font-family:"Liberation Sans",sans-serif;font-size:15px;font-weight:400;color:#0f172a;right:609.00px;text-align:right;'>Rp 22.000</span>
<span class='t' style='top:393.00px;font-family:"Liberation Sans",sans-serif;font-size:15px;font-weight:400;color:#0f172a;right:502.50px;text-align:right;'>10%</span>
<span class='t' style='top:375.00px;font-family:"Liberation Sans",sans-serif;font-size:15px;font-weight:400;color:#0f172a;letter-spacing:-0.095px;right:327.40px;text-align:right;'>Buy 2 Get 3 ·</span>
<span class='t' style='top:395.00px;font-family:"Liberation Sans",sans-serif;font-size:15px;font-weight:400;color:#0f172a;right:329.00px;text-align:right;'>Rp 20.000</span>
<span class='t' style='top:415.00px;font-family:"Liberation Sans",sans-serif;font-size:12.5px;font-weight:400;color:#64748b;letter-spacing:0.175px;right:328.82px;text-align:right;'>10 Apr 2025 - 30 Apr 2025</span>
<span class='t' style='top:393.00px;font-family:"Liberation Sans",sans-serif;font-size:15px;font-weight:400;color:#0f172a;letter-spacing:-1.000px;right:227.50px;text-align:right;'>11%</span>
<span class='t' style='top:393.00px;font-family:"Liberation Sans",sans-serif;font-size:15px;font-weight:400;color:#0f172a;right:47.50px;text-align:right;'>Edit</span>
<div style='left:1373px;top:0px;width:15px;height:400px;background:#fafafa'></div>
<div style='left:1376px;top:6px;width:9px;height:6px;background:transparent'></div>
<svg style='left:1376px;top:6px' width='10' height='6' viewBox='0 0 10 6'><path d='M5 0.5L9.5 5.5h-9z' fill='#8a8a8a'/></svg>
<div style='left:1376px;top:18px;width:9px;height:266px;background:#8a8a8a;border-radius:4.5px'></div>
<svg style='left:1376px;top:388px' width='10' height='6' viewBox='0 0 10 6'><path d='M0.5 0.5h9L5 5.5z' fill='#8a8a8a'/></svg>
</div>
<div style='left:257px;top:610px;width:15px;height:15px;background:#fff'></div>
<div style='left:265px;top:611px;width:7px;height:1px;background:#0f172a'></div>
<div style='left:258px;top:618px;width:1px;height:7px;background:#0f172a'></div>
<div style='left:1635px;top:610px;width:14px;height:15px;background:#fff'></div>
<div style='left:1632px;top:612px;width:15px;height:13px;background:#fafafa'></div>
<svg style='left:1635px;top:618px;' width='10' height='6' viewBox='0 0 10 6'><path d='M5 0.5L9.5 5.5h-9z' fill='#8a8a8a'/></svg>
<div style='left:1635px;top:611px;width:5px;height:1px;background:#0f172a'></div>
<div style='left:1647px;top:618px;width:1px;height:7px;background:#0f172a'></div>
<div style='left:1635px;top:999px;width:14px;height:15px;background:#fff'></div>
<div style='left:1632px;top:999px;width:15px;height:13px;background:#fafafa'></div>
<svg style='left:1635px;top:1000px;' width='10' height='6' viewBox='0 0 10 6'><path d='M0.5 0.5h9L5 5.5z' fill='#8a8a8a'/></svg>
<div style='left:1635px;top:1012px;width:5px;height:1px;background:#0f172a'></div>
<div style='left:1647px;top:999px;width:1px;height:6px;background:#0f172a'></div>
<div style='left:1601px;top:50px;width:309px;height:67px;box-sizing:border-box;border:3px solid #a9a9a9;background:#285577'></div>
<svg style='left:1617px;top:66px;' width='22' height='32' viewBox='0 0 22 32'><defs><radialGradient id='bg' cx='0.4' cy='0.35' r='0.7'><stop offset='0' stop-color='#f4f8fb'/><stop offset='0.6' stop-color='#b9c9d6'/><stop offset='1' stop-color='#6f8799'/></radialGradient></defs><path d='M11 1C5.5 1 2 5 2 9.5c0 3.5 2.5 5.5 3.5 8 .5 1.2.7 2.5.7 3.5h9.6c0-1 .2-2.3.7-3.5 1-2.5 3.5-4.5 3.5-8C20 5 16.5 1 11 1z' fill='url(#bg)'/><path d='M6.5 10.5c2.5 1.5 6.5 1.5 9 0' stroke='#fff6b0' stroke-width='1.3' fill='none'/><rect x='6' y='21.5' width='10' height='6.5' rx='1.5' fill='#c8c8c8'/><rect x='8' y='28' width='6' height='3' rx='1' fill='#999'/></svg>
<span class='t' style='top:62.00px;font-family:"Liberation Mono",monospace;font-size:11.5px;font-weight:700;color:#ffffff;letter-spacing:-0.900px;left:1652.70px;'>(A) Chat: Run &#x27;bash&#x27; command?</span>
<span class='t' style='top:77.00px;font-family:"Liberation Mono",monospace;font-size:11.5px;font-weight:400;color:#e8eef3;letter-spacing:-0.900px;left:1652.70px;'>The current chat session requires your</span>
<span class='t' style='top:92.00px;font-family:"Liberation Mono",monospace;font-size:11.5px;font-weight:400;color:#e8eef3;letter-spacing:-0.900px;left:1652.70px;'>confirmation to proceed.</span>
</div></body></html>
